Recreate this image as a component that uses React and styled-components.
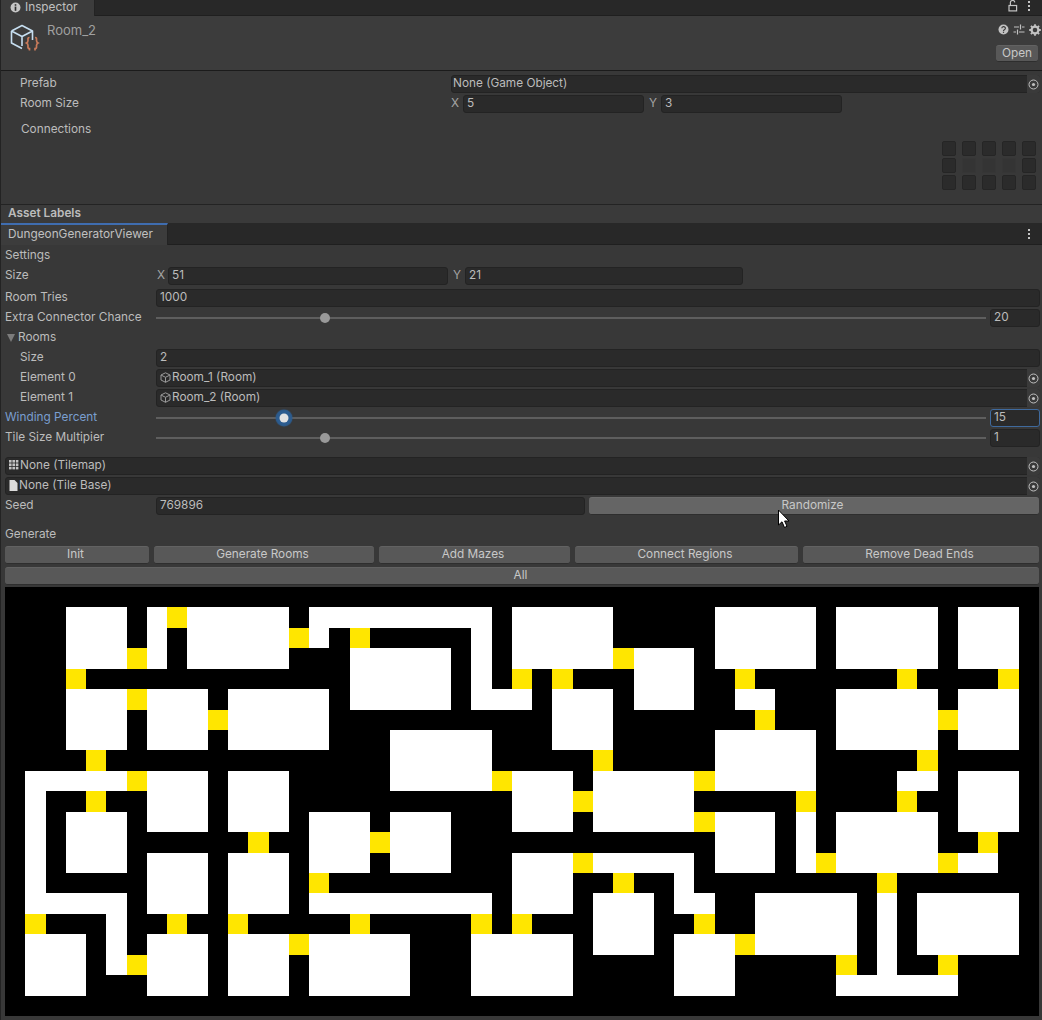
import React from "react";
import styled, { createGlobalStyle } from "styled-components";

const Global = createGlobalStyle`
  html, body { margin: 0; padding: 0; background: #383838; }
  * { box-sizing: border-box; }
  #root { width: 1042px; height: 1020px; overflow: hidden; }
`;

const Page = styled.div`
  position: relative;
  width: 1042px;
  height: 1020px;
  overflow: hidden;
  display: flex;
  flex-direction: column;
  background: #383838;
  border-left: 1px solid #232323;
  font-family: Inter, "Liberation Sans", sans-serif;
  font-size: 11.8px;
  line-height: 14px;
  color: #bcbcbc;
`;

const TabStrip = styled.div`
  display: flex;
  align-items: stretch;
  justify-content: space-between;
  height: ${(p) => p.$h}px;
  flex: none;
  background: #282828;
  border-bottom: 1px solid #1f1f1f;
  padding-right: 11px;
`;

const Tab = styled.div`
  display: flex;
  align-items: center;
  gap: 4px;
  width: ${(p) => p.$w}px;
  padding-left: ${(p) => p.$pl}px;
  padding-bottom: 2px;
  margin-bottom: -1px;
  background: #3c3c3c;
  color: #c0c0c0;
  border-top: ${(p) => (p.$active ? "2px solid #3f6db0" : "none")};
  border-right: 1px solid #232323;
`;

const TabTools = styled.div`
  display: flex;
  align-items: center;
  gap: 9px;
  padding-bottom: ${(p) => p.$pb || 0}px;
  padding-top: ${(p) => p.$pt || 0}px;
`;

const Header = styled.div`
  display: flex;
  justify-content: space-between;
  height: 55px;
  flex: none;
  background: #3c3c3c;
  border-bottom: 1px solid #1b1b1b;
  padding: 7px 3px 0 9px;
`;

const HeaderLeft = styled.div`
  display: flex;
  align-items: flex-start;
  gap: 4px;
`;

const AssetName = styled.div`
  color: #a0a0a0;
  font-size: 13px;
  line-height: 15px;
`;

const HeaderRight = styled.div`
  display: flex;
  flex-direction: column;
  align-items: flex-end;
  gap: 9px;
`;

const HeaderTools = styled.div`
  display: flex;
  gap: 4px;
  height: 13px;
  align-items: center;
  margin-right: -2px;
`;

const Body = styled.div`
  display: flex;
  flex-direction: column;
  flex: none;
  height: ${(p) => p.$h}px;
  padding-top: ${(p) => p.$pt}px;
  padding-left: ${(p) => p.$pl}px;
  padding-right: 2px;
`;

const Row = styled.div`
  display: flex;
  align-items: center;
  flex: none;
  height: 20px;
  margin-top: ${(p) => p.$mt || 0}px;
`;

const Label = styled.div`
  flex: none;
  width: ${(p) => p.$w}px;
  padding-left: ${(p) => p.$pl || 0}px;
  padding-bottom: 2px;
  color: ${(p) => (p.$focus ? "#7a9fd0" : "#bcbcbc")};
  white-space: nowrap;
`;

const FoldoutLabel = styled(Label)`
  display: flex;
  align-items: center;
  gap: 3px;
  padding-left: 2px;
`;

const FoldArrow = styled.div`
  width: 0;
  height: 0;
  border-left: 4px solid transparent;
  border-right: 4px solid transparent;
  border-top: 8px solid #7c7c7c;
  margin-top: 2px;
`;

const Field = styled.div`
  display: flex;
  align-items: center;
  height: 18px;
  flex: ${(p) => (p.$w ? "none" : "1")};
  width: ${(p) => (p.$w ? `${p.$w}px` : "auto")};
  min-width: 0;
  padding: 0 0 2px 3px;
  gap: 1px;
  background: #2a2a2a;
  border: 1px solid ${(p) => (p.$focus ? "#3f6a9e" : "#232323")};
  border-radius: 3px;
  color: #bcbcbc;
  white-space: nowrap;
`;

const ObjectField = styled(Field)`
  position: relative;
  padding-right: 13px;
  padding-left: ${(p) => (p.$bare ? 1 : 3)}px;
`;

const PickButton = styled.div`
  position: absolute;
  right: -1px;
  top: -1px;
  bottom: -1px;
  width: 13px;
  display: flex;
  align-items: center;
  justify-content: center;
  background: #3a3a3a;
  border-radius: 0 3px 3px 0;
`;

const AxisLabel = styled.div`
  flex: none;
  width: ${(p) => p.$w}px;
  padding-left: ${(p) => p.$pl || 0}px;
  padding-bottom: 2px;
  color: #a4a4a4;
`;

const ToggleGrid = styled.div`
  display: grid;
  grid-template-columns: repeat(5, 14px);
  grid-auto-rows: 15px;
  column-gap: 6px;
  row-gap: 2px;
  align-self: flex-end;
  margin: 1px 4px 0 0;
`;

const ToggleCell = styled.div`
  background: ${(p) => (p.$dim ? "#343434" : "#2b2b2b")};
  border: 1px solid ${(p) => (p.$dim ? "#363636" : "#252525")};
  border-radius: 2px;
`;

const LabelsBar = styled.div`
  display: flex;
  align-items: center;
  flex: none;
  height: 19px;
  padding: 0 0 3px 7px;
  background: #3a3a3a;
  border-top: 1px solid #232323;
  color: #bcbcbc;
  font-weight: 600;
`;

const SliderWrap = styled.div`
  display: flex;
  flex: 1;
  align-items: center;
  gap: 4px;
  height: 18px;
`;

const Track = styled.div`
  position: relative;
  flex: 1;
  height: 2px;
  background: #5e5e5e;
`;

const Thumb = styled.div`
  position: absolute;
  top: 50%;
  width: ${(p) => (p.$focus ? 9 : 10)}px;
  height: ${(p) => (p.$focus ? 9 : 10)}px;
  transform: translate(-50%, -50%);
  border-radius: 50%;
  background: ${(p) => (p.$focus ? "#e2e2e2" : "#999999")};
  box-shadow: ${(p) => (p.$focus ? "0 0 1px 4px #2c5c8f" : "none")};
`;

const ButtonBase = styled.div`
  display: flex;
  align-items: center;
  justify-content: center;
  height: 18px;
  padding: 0 3px 2px 0;
  background: ${(p) => (p.$hover ? "#656565" : "#585858")};
  border-radius: 3px;
  border-bottom: 1px solid #2e2e2e;
  border-top: 1px solid ${(p) => (p.$hover ? "#6c6c6c" : "#626262")};
  color: #c8c8c8;
`;

const OpenButton = styled(ButtonBase)`
  width: 42px;
  height: 17px;
  margin-right: 1px;
  padding-right: 0;
`;

const RandomButton = styled(ButtonBase)`
  flex: none;
  width: 450px;
  margin: 0 1px 0 4px;
`;

const ButtonRow = styled.div`
  display: grid;
  grid-template-columns: 144px 220px 191px 223px 236px;
  column-gap: 5px;
  flex: none;
  margin-top: 1px;
`;

const WideButton = styled(ButtonBase)`
  width: 1034px;
  flex: none;
  margin-top: 3px;
`;

const MapFrame = styled.svg`
  display: block;
  flex: none;
  width: 1034px;
  height: 429px;
  margin-top: 2px;
  background: #000;
`;

const Pointer = styled.svg`
  position: absolute;
  left: 776px;
  top: 509px;
`;

const Info = () => (
  <svg width="11" height="11" viewBox="0 0 12 12">
    <circle cx="6" cy="6" r="5.4" fill="#c6c6c6" />
    <rect x="5.100" y="2.400" width="1.800" height="1.700" fill="#2e2e2e" />
    <rect x="5.100" y="5" width="1.800" height="4.600" fill="#2e2e2e" />
  </svg>
);

const Lock = () => (
  <svg width="10" height="12" viewBox="0 0 10 12" fill="none" stroke="#c4c4c4" strokeWidth="1.200">
    <rect x="1" y="5.500" width="7.600" height="5.400" />
    <path d="M2.400 5.500 V3 a2.200 2.200 0 0 1 4.400 -0.600" />
  </svg>
);

const Dots = () => (
  <svg width="4" height="12" viewBox="0 0 4 12" fill="#c4c4c4">
    <rect x="1" y="1" width="2" height="2" />
    <rect x="1" y="5" width="2" height="2" />
    <rect x="1" y="9" width="2" height="2" />
  </svg>
);

const Help = () => (
  <svg width="11" height="11" viewBox="0 0 11 11">
    <circle cx="5.500" cy="5.500" r="5" fill="#c2c2c2" />
    <path d="M3.800 4.200 a1.800 1.600 0 1 1 2.600 1.500 c-.7.4-.9.7-.9 1.200" fill="none" stroke="#3a3a3a" strokeWidth="1.200" />
    <rect x="4.900" y="7.700" width="1.200" height="1.200" fill="#3a3a3a" />
  </svg>
);

const Sliders = () => (
  <svg width="12" height="11" viewBox="0 0 12 11" fill="none" stroke="#c2c2c2" strokeWidth="1.200">
    <path d="M1 3 H6 M9 3 H11.500 M7.500 .5 V5.500 M.5 8 H3 M6 8 H11.500 M4.500 5.500 V10.500" />
  </svg>
);

const Gear = () => (
  <svg width="12" height="12" viewBox="0 0 12 12">
    <circle cx="6" cy="6" r="3.400" fill="none" stroke="#c2c2c2" strokeWidth="2.200" />
    <path d="M6 .2 V11.800 M.2 6 H11.800 M1.900 1.900 L10.100 10.100 M10.100 1.900 L1.900 10.100" stroke="#c2c2c2" strokeWidth="1.800" strokeDasharray="2 7.600 2" />
  </svg>
);

const AssetIcon = () => (
  <svg width="33" height="32" viewBox="0 0 33 32" fill="none">
    <path d="M1.500 8 L12 2.500 L22.500 8 L22.500 17 M1.500 8 V20 L12 25.500 M1.500 8 L12 13.500 L22.500 8 M12 13.500 V23" stroke="#c6def0" strokeWidth="1.600" strokeLinejoin="round" />
    <path d="M19.500 14.500 c-2 0-1.500 1.500-1.500 3 c0 1.500-.5 2-1.500 2.500 c1 .5 1.500 1 1.500 2.500 c0 1.500-.5 3 1.500 3 v2 M25 14.500 c2 0 1.500 1.500 1.500 3 c0 1.500 .5 2 1.500 2.500 c-1 .5-1.500 1-1.500 2.500 c0 1.500 .5 3-1.500 3 v2" stroke="#c87a5a" strokeWidth="1.700" />
  </svg>
);

const Target = () => (
  <svg width="11" height="11" viewBox="0 0 11 11">
    <circle cx="5.500" cy="5.500" r="4.500" fill="none" stroke="#c0c0c0" strokeWidth="1" />
    <circle cx="5.500" cy="5.500" r="1.600" fill="#c0c0c0" />
  </svg>
);

const MiniCube = () => (
  <svg width="11" height="11" viewBox="0 0 11 11" fill="none" stroke="#9a9a9a" strokeWidth="1">
    <path d="M1 3 L5.500 .8 L10 3 V8 L5.500 10.300 L1 8 Z M1 3 L5.500 5.300 L10 3 M5.500 5.300 V10.300" />
  </svg>
);

const TileIcon = () => (
  <svg width="10" height="10" viewBox="0 0 10 10" fill="#c2c2c2">
    {[0, 3.4, 6.8].flatMap((y) =>
      [0, 3.4, 6.8].map((x) => <rect key={`${x}-${y}`} x={x} y={y} width="2.600" height="2.600" />)
    )}
  </svg>
);

const FileIcon = () => (
  <svg width="9" height="11" viewBox="0 0 9 11" fill="#dcdcdc">
    <path d="M0.500 0 H5.500 L8.500 3 V11 H0.500 Z" />
  </svg>
);

const ROOMS = [
  [3,1,3,3],[7,1,1,3],[9,1,5,3],[15,1,9,1],[15,2,1,1],[23,2,1,4],[23,5,3,1],[25,1,5,3],[17,3,5,3],
  [3,5,3,3],[7,5,3,3],[11,5,5,3],[19,7,5,3],[1,9,5,1],[7,9,3,3],[11,9,3,3],[1,10,1,6],[1,15,5,1],
  [5,16,1,3],[3,11,3,3],[7,13,3,3],[11,13,3,3],[15,11,3,3],[19,11,3,3],[15,15,9,1],[1,17,3,3],
  [7,17,3,3],[11,17,3,3],[15,17,5,3],[23,17,5,3],[31,3,3,3],[35,1,5,3],[41,1,5,3],[47,1,3,3],
  [27,5,3,3],[36,5,2,1],[41,5,5,3],[47,5,3,3],[35,7,5,3],[25,9,3,3],[29,9,5,3],[35,11,3,3],
  [39,11,1,3],[41,11,5,3],[44,9,2,1],[47,9,3,3],[47,13,2,1],[25,13,3,3],[29,13,5,1],[33,14,1,2],
  [33,15,2,1],[29,15,3,3],[33,17,3,3],[37,15,5,3],[43,15,1,4],[41,19,6,1],[45,15,5,3],
];

const DOORS = [
  [8,1],[6,3],[3,4],[14,2],[17,2],[25,4],[27,4],[30,3],[36,4],[44,4],[49,4],[6,5],[10,6],[37,6],
  [46,6],[4,8],[29,8],[45,8],[6,9],[24,9],[34,9],[4,10],[28,10],[39,10],[44,10],[12,12],[18,12],
  [34,11],[48,12],[40,13],[46,13],[28,13],[15,14],[30,14],[43,14],[1,16],[8,16],[11,16],[17,16],
  [23,16],[25,16],[34,16],[14,17],[36,17],[6,18],[41,18],[46,18],
];

const Slider = ({ pos, value, focus }) => (
  <SliderWrap>
    <Track>
      <Thumb $focus={focus} style={{ left: pos }} />
    </Track>
    <Field $w={50} $focus={focus}>{value}</Field>
  </SliderWrap>
);

const Obj = ({ icon, children }) => (
  <ObjectField $bare={!icon}>
    {icon}
    {children}
    <PickButton>
      <Target />
    </PickButton>
  </ObjectField>
);

export default function App() {
  return (
    <Page>
      <Global />
      <TabStrip $h={16}>
        <Tab $w={94} $pl={9}>
          <Info />
          Inspector
        </Tab>
        <TabTools $pb={3}>
          <Lock />
          <Dots />
        </TabTools>
      </TabStrip>
      <Header>
        <HeaderLeft>
          <AssetIcon />
          <AssetName>Room_2</AssetName>
        </HeaderLeft>
        <HeaderRight>
          <HeaderTools>
            <Help />
            <Sliders />
            <Gear />
          </HeaderTools>
          <OpenButton>Open</OpenButton>
        </HeaderRight>
      </Header>
      <Body $h={133} $pt={3} $pl={19}>
        <Row>
          <Label $w={431}>Prefab</Label>
          <Obj>None (Game Object)</Obj>
        </Row>
        <Row>
          <Label $w={431}>Room Size</Label>
          <AxisLabel $w={12}>X</AxisLabel>
          <Field $w={181}>5</Field>
          <AxisLabel $w={17} $pl={5}>Y</AxisLabel>
          <Field $w={181}>3</Field>
        </Row>
        <Row $mt={6}>
          <Label $w={431} $pl={1}>Connections</Label>
        </Row>
        <ToggleGrid>
          {[0, 1, 2, 3, 4, 5, 6, 7, 8, 9, 10, 11, 12, 13, 14].map((i) => (
            <ToggleCell key={i} $dim={i >= 6 && i <= 8} />
          ))}
        </ToggleGrid>
      </Body>
      <LabelsBar>Asset Labels</LabelsBar>
      <TabStrip $h={22}>
        <Tab $w={167} $pl={7} $active>DungeonGeneratorViewer</Tab>
        <TabTools $pt={1}>
          <Dots />
        </TabTools>
      </TabStrip>
      <Body $h={774} $pt={1} $pl={4}>
        <Row>
          <Label $w={151}>Settings</Label>
        </Row>
        <Row>
          <Label $w={151}>Size</Label>
          <AxisLabel $w={12} $pl={1}>X</AxisLabel>
          <Field $w={280}>51</Field>
          <AxisLabel $w={17} $pl={5}>Y</AxisLabel>
          <Field $w={278}>21</Field>
        </Row>
        <Row $mt={2}>
          <Label $w={151}>Room Tries</Label>
          <Field>1000</Field>
        </Row>
        <Row>
          <Label $w={151}>Extra Connector Chance</Label>
          <Slider pos={169} value="20" />
        </Row>
        <Row>
          <FoldoutLabel $w={151}>
            <FoldArrow />
            Rooms
          </FoldoutLabel>
        </Row>
        <Row>
          <Label $w={151} $pl={15}>Size</Label>
          <Field>2</Field>
        </Row>
        <Row>
          <Label $w={151} $pl={15}>Element 0</Label>
          <Obj icon={<MiniCube />}>Room_1 (Room)</Obj>
        </Row>
        <Row>
          <Label $w={151} $pl={15}>Element 1</Label>
          <Obj icon={<MiniCube />}>Room_2 (Room)</Obj>
        </Row>
        <Row>
          <Label $w={151} $focus>Winding Percent</Label>
          <Slider pos={128} value="15" focus />
        </Row>
        <Row>
          <Label $w={151}>Tile Size Multipier</Label>
          <Slider pos={169} value="1" />
        </Row>
        <Row $mt={8}>
          <Obj icon={<TileIcon />}>None (Tilemap)</Obj>
        </Row>
        <Row>
          <Obj icon={<FileIcon />}>None (Tile Base)</Obj>
        </Row>
        <Row>
          <Label $w={151}>Seed</Label>
          <Field>769896</Field>
          <RandomButton $hover>Randomize</RandomButton>
        </Row>
        <Row $mt={9}>
          <Label $w={151}>Generate</Label>
        </Row>
        <ButtonRow>
          <ButtonBase>Init</ButtonBase>
          <ButtonBase>Generate Rooms</ButtonBase>
          <ButtonBase>Add Mazes</ButtonBase>
          <ButtonBase>Connect Regions</ButtonBase>
          <ButtonBase>Remove Dead Ends</ButtonBase>
        </ButtonRow>
        <WideButton>All</WideButton>
        <MapFrame viewBox="0 0 51 21" preserveAspectRatio="none" shapeRendering="crispEdges">
          {ROOMS.map(([x, y, w, h]) => (
            <rect key={`r${x}-${y}`} x={x} y={y} width={w} height={h} fill="#ffffff" />
          ))}
          {DOORS.map(([x, y]) => (
            <rect key={`d${x}-${y}`} x={x} y={y} width="1" height="1" fill="#ffe600" />
          ))}
        </MapFrame>
      </Body>
      <Pointer width="14" height="20" viewBox="0 0 14 20">
        <path d="M1.500 1 V16 L5 12.800 L7.500 18.500 L10 17.300 L7.600 12 H12 Z" fill="#fff" stroke="#000" strokeWidth="1" />
      </Pointer>
    </Page>
  );
}
